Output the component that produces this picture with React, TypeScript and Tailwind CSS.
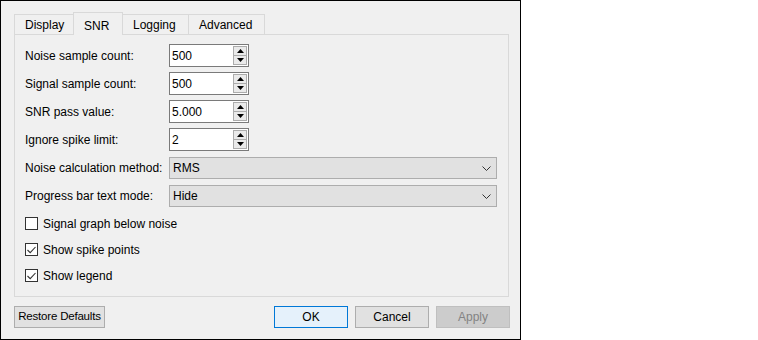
import React from "react";

function SpinBox({ value }: { value: string }) {
  return (
    <div className="flex h-[23px] w-[80px] items-stretch border border-[#7a7a7a] bg-white">
      <div className="flex flex-1 items-center pl-[2px] leading-none">{value}</div>
      <div className="my-px mr-px flex w-[14px] flex-col">
        <div className="flex flex-1 items-center justify-center border border-[#acacac] bg-[#eaeaea]">
          <svg width="7" height="4" viewBox="0 0 7 4">
            <path d="M0 4 L3.5 0 L7 4 Z" fill="#000" />
          </svg>
        </div>
        <div className="flex flex-1 items-center justify-center border border-t-0 border-[#acacac] bg-[#eaeaea]">
          <svg width="7" height="4" viewBox="0 0 7 4">
            <path d="M0 0 L7 0 L3.5 4 Z" fill="#000" />
          </svg>
        </div>
      </div>
    </div>
  );
}

function Combo({ value }: { value: string }) {
  return (
    <div className="flex h-[22px] w-[328px] items-center justify-between border border-[#adadad] bg-[#e1e1e1] pl-[3px] pr-[5px]">
      <span>{value}</span>
      <svg width="9" height="5" viewBox="0 0 9 5">
        <path d="M0.5 0.5 L4.5 4.5 L8.5 0.5" fill="none" stroke="#333" strokeWidth="1" />
      </svg>
    </div>
  );
}

function Check({ label, checked }: { label: string; checked?: boolean }) {
  return (
    <div className="flex h-[13px] items-center gap-[5px]">
      <div className="flex h-[13px] w-[13px] items-center justify-center border border-[#333] bg-white">
        {checked && (
          <svg width="9" height="8" viewBox="0 0 9 8">
            <path d="M0.5 4 L3.2 6.7 L8.5 1" fill="none" stroke="#333" strokeWidth="1.1" />
          </svg>
        )}
      </div>
      <span>{label}</span>
    </div>
  );
}

export default function App() {
  const spins = [
    ["Noise sample count:", "500"],
    ["Signal sample count:", "500"],
    ["SNR pass value:", "5.000"],
    ["Ignore spike limit:", "2"],
  ];

  return (
    <div className="h-[340px] w-[758px] bg-white font-['Liberation_Sans',sans-serif] text-[12px] text-black">
      <div className="flex h-[340px] w-[521px] flex-col border border-black bg-[#f0f0f0] pl-[13px] pr-[10px] pt-[11px]">
        {/* Tabs */}
        <div className="relative z-10 flex h-[22px] items-end">
          <div className="flex h-[20px] w-[59px] items-center border-l border-t border-[#d9d9d9] pl-[10px]">
            Display
          </div>
          <div className="-mb-px flex h-[23px] w-[50px] items-start border-l border-r border-t border-[#d9d9d9] bg-[#f0f0f0] pl-[10px] pt-[4px]">
            SNR
          </div>
          <div className="flex h-[20px] w-[65px] items-center border-t border-[#d9d9d9] pl-[10px]">
            Logging
          </div>
          <div className="flex h-[20px] w-[77px] items-center border-l border-r border-t border-[#d9d9d9] pl-[10px]">
            Advanced
          </div>
        </div>

        {/* Pane */}
        <div className="flex h-[263px] w-[495px] flex-col border border-[#d9d9d9] pl-[10px] pt-[9px]">
          {spins.map(([label, value], i) => (
            <div
              key={label}
              className={`flex h-[23px] items-center ${i === 3 ? "mb-[6px]" : "mb-[5px]"}`}
            >
              <span className="w-[144px]">{label}</span>
              <SpinBox value={value} />
            </div>
          ))}
          <div className="mb-[6px] flex h-[22px] items-center">
            <span className="w-[144px]">Noise calculation method:</span>
            <Combo value="RMS" />
          </div>
          <div className="flex h-[22px] items-center">
            <span className="w-[144px]">Progress bar text mode:</span>
            <Combo value="Hide" />
          </div>
          <div className="mt-[10px] flex flex-col gap-[13px]">
            <Check label="Signal graph below noise" />
            <Check label="Show spike points" checked />
            <Check label="Show legend" checked />
          </div>
        </div>

        {/* Buttons */}
        <div className="mt-[9px] flex h-[22px] items-stretch">
          <button className="flex w-[91px] items-center justify-center overflow-visible whitespace-nowrap border border-[#adadad] bg-[#e1e1e1] text-[11.5px] tracking-[-0.2px]">
            Restore Defaults
          </button>
          <div className="ml-auto flex gap-[7px]">
            <button className="w-[74px] border border-[#0078d7] bg-[#e5f1fb]">OK</button>
            <button className="w-[74px] border border-[#adadad] bg-[#e1e1e1]">Cancel</button>
            <button className="w-[74px] border border-[#bfbfbf] bg-[#cccccc] text-[#838383]">Apply</button>
          </div>
        </div>
      </div>
    </div>
  );
}
